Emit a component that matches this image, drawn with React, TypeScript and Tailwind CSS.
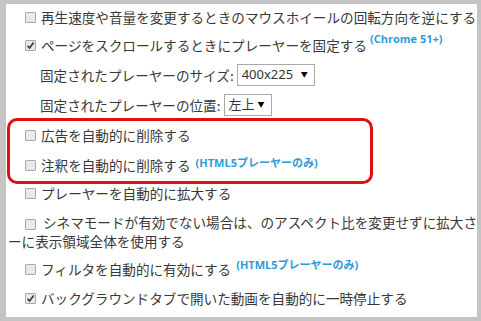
import React from "react";

const Box: React.FC<{ checked?: boolean }> = ({ checked }) => (
  <span className="ml-[17px] mr-[5px] inline-flex h-[11px] w-[11px] shrink-0 items-center justify-center rounded-[1px] border border-[#a8a8a8] bg-[#e9e9e9]">
    {checked && (
      <svg width="9" height="9" viewBox="0 0 9 9">
        <path d="M1.5 4.8 L3.6 7 L7.6 1.6" fill="none" stroke="#333" strokeWidth="1.6" />
      </svg>
    )}
  </span>
);

const Note: React.FC<{ children: React.ReactNode; className?: string }> = ({ children, className }) => (
  <span
    className={`text-[11px] font-bold text-[#2f9bd6] ${className ?? ""}`}
    style={{ fontFamily: '"Open Sans", "Noto Sans CJK JP", sans-serif' }}
  >
    {children}
  </span>
);

const Select: React.FC<{ value: string; w: string }> = ({ value, w }) => (
  <span
    className={`ml-[3px] flex h-[22px] ${w} items-center justify-between border border-[#a9a9a9] bg-white pl-[4px] pr-[6px] text-[13px] text-[#333]`}
    style={{ fontFamily: '"Noto Sans", "Noto Sans CJK JP", sans-serif' }}
  >
    <span>{value}</span>
    <span className="text-[7px] text-black">▼</span>
  </span>
);

const Row: React.FC<{ children: React.ReactNode; className?: string }> = ({ children, className }) => (
  <div className={`flex h-[20px] items-center whitespace-nowrap ${className ?? "mb-[9px]"}`}>{children}</div>
);

export default function App() {
  return (
    <div
      className="relative h-[321px] w-[481px] overflow-hidden border-b-[4px] border-l-[6px] border-r-[4px] border-t-[4px] border-[#c4c4c4] bg-white text-[13.6px] text-[#383838]"
      style={{ fontFamily: '"Noto Sans CJK JP", "Noto Sans", sans-serif' }}
    >
      <div className="w-[600px] pl-[2px] pt-[3px]">
        <Row className="mb-[8px]">
          <Box />
          <span>再生速度や音量を変更するときのマウスホイールの回転方向を逆にする</span>
        </Row>
        <Row className="mb-[10px]">
          <Box checked />
          <span>ページをスクロールするときにプレーヤーを固定する</span>
          <Note className="relative -top-[6px] ml-[3px]">(Chrome 51+)</Note>
        </Row>
        <Row className="mb-[10px]">
          <span className="ml-[32px]">固定されたプレーヤーのサイズ:</span>
          <Select value="400x225" w="w-[78px]" />
        </Row>
        <Row className="mb-[10px]">
          <span className="ml-[32px]">固定されたプレーヤーの位置:</span>
          <Select value="左上" w="w-[48px]" />
        </Row>
        <Row className="mb-[10px]">
          <Box />
          <span>広告を自動的に削除する</span>
        </Row>
        <Row className="mb-[8px]">
          <Box />
          <span>注釈を自動的に削除する</span>
          <Note className="relative -top-[2px] ml-[5px]">(HTML5プレーヤーのみ)</Note>
        </Row>
        <Row className="mb-[10px]">
          <Box />
          <span>プレーヤーを自動的に拡大する</span>
        </Row>
        <div className="mb-[8px] whitespace-nowrap leading-[19px]">
          <span className="inline-flex items-center align-middle">
            <Box />
          </span>
          <span className="ml-[2px]">シネマモードが有効でない場合は、のアスペクト比を変更せずに拡大されたプレーヤ</span>
          <br />
          <span>ーに表示領域全体を使用する</span>
        </div>
        <Row>
          <Box />
          <span>フィルタを自動的に有効にする</span>
          <Note className="relative -top-[4px] ml-[5px]">(HTML5プレーヤーのみ)</Note>
        </Row>
        <Row>
          <Box checked />
          <span>バックグラウンドタブで開いた動画を自動的に一時停止する</span>
        </Row>
      </div>
      <div className="pointer-events-none absolute left-[1px] top-[114px] h-[66px] w-[366px] rounded-[10px] border-[3px] border-[#e01010]" />
    </div>
  );
}
